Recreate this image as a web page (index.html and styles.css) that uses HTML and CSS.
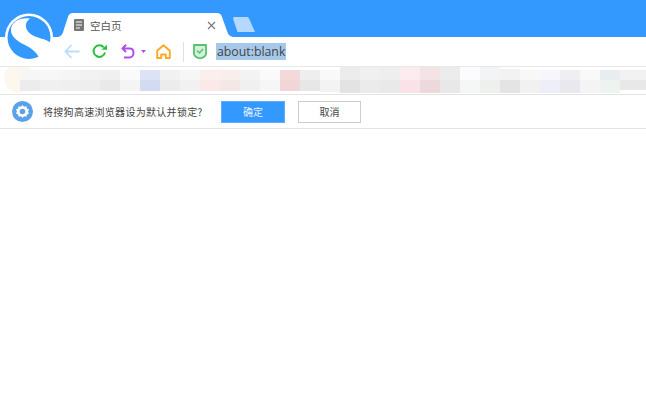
FILE: index.html
```html
<!DOCTYPE html>
<html lang="zh-CN">
<head>
    <meta charset="UTF-8">
    <title>空白页</title>
    <link rel="stylesheet" href="styles.css">
</head>
<body>
    <svg class="logo" width="52" height="52" viewBox="0 0 52 52">
        <circle cx="27" cy="26.500" r="24" fill="#fff"/>
        <circle cx="27" cy="26.500" r="21.500" fill="#3399ff"/>
        <path d="M28 7.500C18 6 9 11 9 19C9 25 14 29 20 32.500C28 36.500 35 40 38 49Q46 44 50 33C44 27 34 27.500 28 22.500C23 18 22 12 28 7.500Z" fill="#fff"/>
    </svg>

    <header class="tabstrip">
        <div class="tab">
            <svg class="tab-shape" width="176" height="24" viewBox="0 0 176 24"><path d="M0 24C4 23 5 20 6 16L10 4C11 1 12 0 16 0H158C162 0 163 1 164 4L169 18C170 21 171 23 175 24Z" fill="#fff"/></svg>
            <svg class="page-icon" width="10" height="12" viewBox="0 0 10 12">
                <rect width="10" height="12" rx="1" fill="#777"/>
                <path d="M2 3H8M2 6H8M2 9H6" stroke="#fff" stroke-width="1"/>
            </svg>
            <span class="tab-title">空白页</span>
            <svg class="tab-close" width="9" height="9" viewBox="0 0 9 9"><path d="M1 1L8 8M8 1L1 8" stroke="#777" stroke-width="1.100"/></svg>
        </div>
        <svg class="new-tab" width="24" height="15" viewBox="0 0 24 15"><path d="M1 1.500C1 .5 1.500 0 2.500 0H15C16 0 16.500 .5 17 1.500L23 15H5.500Z" fill="#b5d8ff"/></svg>
    </header>

    <div class="toolbar">
        <svg class="btn-back" width="16" height="15" viewBox="0 0 16 15" fill="none"><path d="M7.500 1L1.500 7.500L7.500 14M2 7.500H15.500" stroke="#bcdcff" stroke-width="1.800"/></svg>
        <svg class="btn-reload" width="16" height="15" viewBox="0 0 16 15" fill="none"><path d="M13 8.500A5.800 5.800 0 1 1 11.800 3.300" stroke="#22c33c" stroke-width="2"/><path d="M9.500 5.800H15V.8Z" fill="#22c33c"/></svg>
        <svg class="btn-undo" width="14" height="15" viewBox="0 0 14 15" fill="none"><path d="M1.500 4.500H8.500C11 4.500 12.500 6.300 12.500 8.800C12.500 11.500 10.800 13.500 8.500 13.500H3M5 .8L1.500 4.500L5 8" stroke="#b04df0" stroke-width="2"/></svg>
        <svg class="btn-more" width="5" height="3" viewBox="0 0 5 3"><path d="M0 0H5L2.500 3Z" fill="#b04df0"/></svg>
        <svg class="btn-home" width="15" height="15" viewBox="0 0 15 15" fill="none"><path d="M1.200 6.800L7.500 1.200L13.800 6.800V14H9.800V10.500H5.200V14H1.200Z" stroke="#ffa826" stroke-width="1.900" stroke-linejoin="round"/></svg>
        <div class="divider"></div>
        <svg class="shield" width="14" height="15" viewBox="0 0 14 15"><path d="M1 1H13V10C13 12 10 14 7 14.500C4 14 1 12 1 10Z" fill="#d3f0da" stroke="#58c070" stroke-width="1.800"/><path d="M4 6.500L6.500 9L10 5" fill="none" stroke="#58c070" stroke-width="1.500"/></svg>
        <span class="url">about:blank</span>
    </div>

    <div class="bookmarks">
        <svg class="bookmarks-blur" width="646" height="27" viewBox="0 0 646 27">
            <circle cx="19" cy="11" r="15" fill="#fdf8ee"/>
            <rect x="20" y="3" width="20" height="10" fill="#f6f6f6"/><rect x="20" y="13" width="20" height="11" fill="#ececec"/>
            <rect x="40" y="3" width="20" height="10" fill="#f7f7f7"/><rect x="40" y="13" width="20" height="11" fill="#f0f0f0"/>
            <rect x="60" y="3" width="20" height="10" fill="#f5f5f5"/><rect x="60" y="13" width="20" height="11" fill="#efefef"/>
            <rect x="80" y="3" width="20" height="10" fill="#f2f2f2"/><rect x="80" y="13" width="20" height="11" fill="#eeeeee"/>
            <rect x="100" y="3" width="20" height="10" fill="#f0f0f0"/><rect x="100" y="13" width="20" height="11" fill="#e9e9e9"/>
            <rect x="120" y="3" width="20" height="10" fill="#fafafa"/><rect x="120" y="13" width="20" height="11" fill="#f4f4f4"/>
            <rect x="140" y="3" width="20" height="10" fill="#dde3f6"/><rect x="140" y="13" width="20" height="11" fill="#d3dbf3"/>
            <rect x="160" y="3" width="20" height="10" fill="#f1f1f1"/><rect x="160" y="13" width="20" height="11" fill="#ececec"/>
            <rect x="180" y="3" width="20" height="10" fill="#f6f6f6"/><rect x="180" y="13" width="20" height="11" fill="#f1f1f1"/>
            <rect x="200" y="3" width="20" height="10" fill="#fdeeee"/><rect x="200" y="13" width="20" height="11" fill="#fbe9e8"/>
            <rect x="220" y="3" width="20" height="10" fill="#f8eeec"/><rect x="220" y="13" width="20" height="11" fill="#f3e8e6"/>
            <rect x="240" y="3" width="20" height="10" fill="#f3f3f3"/><rect x="240" y="13" width="20" height="11" fill="#f0f0f0"/>
            <rect x="260" y="3" width="20" height="10" fill="#fafafa"/><rect x="260" y="13" width="20" height="11" fill="#f6f6f6"/>
            <rect x="280" y="3" width="20" height="10" fill="#f5d9da"/><rect x="280" y="13" width="20" height="11" fill="#f2d5d6"/>
            <rect x="300" y="3" width="20" height="10" fill="#eeeeee"/><rect x="300" y="13" width="20" height="11" fill="#e7e7e7"/>
            <rect x="320" y="3" width="20" height="10" fill="#f9f9f9"/><rect x="320" y="13" width="20" height="12" fill="#f3f3f3"/>
            <rect x="340" y="0" width="20" height="13" fill="#ececec"/><rect x="340" y="13" width="20" height="13" fill="#e3e3e3"/>
            <rect x="360" y="0" width="20" height="13" fill="#f0f0f0"/><rect x="360" y="13" width="20" height="13" fill="#ebebeb"/>
            <rect x="380" y="0" width="20" height="13" fill="#eeeeee"/><rect x="380" y="13" width="20" height="13" fill="#e9e9e9"/>
            <rect x="400" y="0" width="20" height="13" fill="#fcecef"/><rect x="400" y="13" width="20" height="13" fill="#fae3e8"/>
            <rect x="420" y="0" width="20" height="13" fill="#f3e3e5"/><rect x="420" y="13" width="20" height="13" fill="#ecd9dc"/>
            <rect x="440" y="0" width="20" height="13" fill="#ececec"/><rect x="440" y="13" width="20" height="13" fill="#e8e8e8"/>
            <rect x="460" y="0" width="20" height="13" fill="#fcfcff"/><rect x="460" y="13" width="20" height="13" fill="#f5f7f7"/>
            <rect x="480" y="0" width="20" height="13" fill="#f3f4f6"/><rect x="480" y="13" width="20" height="13" fill="#eef0ee"/>
            <rect x="500" y="2" width="20" height="11" fill="#f2f2f2"/><rect x="500" y="13" width="20" height="13" fill="#e4e4e4"/>
            <rect x="520" y="3" width="20" height="10" fill="#f8f8f8"/><rect x="520" y="13" width="20" height="13" fill="#f1f1f1"/>
            <rect x="540" y="3" width="20" height="10" fill="#f6f6fc"/><rect x="540" y="13" width="20" height="13" fill="#eeeef8"/>
            <rect x="560" y="3" width="20" height="10" fill="#efeff3"/><rect x="560" y="13" width="20" height="13" fill="#e8e8ee"/>
            <rect x="580" y="3" width="20" height="10" fill="#f9f9f9"/><rect x="580" y="13" width="20" height="13" fill="#f4f4f4"/>
            <rect x="600" y="3" width="20" height="10" fill="#e8edf0"/><rect x="600" y="13" width="20" height="13" fill="#edf3ef"/>
            <rect x="620" y="3" width="26" height="10" fill="#f2f2f2"/><rect x="620" y="13" width="26" height="10" fill="#e8e8e8"/>
        </svg>
    </div>

    <div class="infobar">
        <svg class="gear" width="21" height="21" viewBox="0 0 21 21">
            <circle cx="10.500" cy="10.500" r="10.500" fill="#5ba1ea"/>
            <path d="M10.500 4L12 5.800L14.300 5.300L15 7.500L17 8.600L16 10.500L17 12.400L15 13.500L14.300 15.700L12 15.200L10.500 17L9 15.200L6.700 15.700L6 13.500L4 12.400L5 10.500L4 8.600L6 7.500L6.700 5.300L9 5.800Z" fill="#fff"/>
            <circle cx="10.500" cy="10.500" r="2.800" fill="#5ba1ea"/>
        </svg>
        <span class="info-text">将搜狗高速浏览器设为默认并锁定?</span>
        <button class="btn btn-ok">确定</button>
        <button class="btn btn-cancel">取消</button>
    </div>
</body>
</html>
```

FILE: styles.css
```css
body {
	margin: 0;
	height: 407px;
	overflow: hidden;
	background: #fff;
	font-family: "Noto Sans CJK SC", "Liberation Sans", sans-serif;
	font-size: 10px;
	color: #444;
}

.logo {
	position: absolute;
	left: 2px;
	top: 11px;
	z-index: 2;
}

.tabstrip {
	display: flex;
	align-items: flex-end;
	height: 37px;
	padding-left: 58px;
	background: #3399ff;
}

.tab {
	position: relative;
	display: flex;
	align-items: center;
	width: 176px;
	height: 24px;
}

.tab-shape {
	position: absolute;
	left: 0;
	top: 0;
}

.page-icon {
	position: relative;
	margin-left: 16px;
}

.tab-title {
	position: relative;
	margin-left: 6px;
	font-size: 10.500px;
	color: #555;
}

.tab-close {
	position: relative;
	margin-left: 85px;
}

.new-tab {
	margin-left: -2px;
	margin-bottom: 5px;
}

.toolbar {
	display: flex;
	align-items: center;
	height: 29px;
	padding-left: 64px;
	border-bottom: 1px solid #e8e8e8;
}

.btn-reload {
	margin-left: 12px;
}

.btn-undo {
	margin-left: 13px;
}

.btn-more {
	margin-left: 6px;
}

.btn-home {
	margin-left: 10px;
}

.divider {
	width: 1px;
	height: 20px;
	margin-left: 12px;
	background: #e0e0e0;
}

.shield {
	margin-left: 9px;
}

.url {
	margin-left: 9px;
	padding: 0 1px;
	background: #a6c9ea;
	font-family: "Open Sans", "Liberation Sans", sans-serif;
	font-size: 12.300px;
	line-height: 17px;
	color: #444;
}

.bookmarks {
	height: 27px;
	border-bottom: 1px solid #e3e3e3;
}

.bookmarks-blur {
	display: block;
}

.infobar {
	display: flex;
	align-items: center;
	height: 33px;
	padding-left: 12px;
	border-bottom: 1px solid #e3e3e3;
}

.info-text {
	margin-left: 10px;
	width: 178px;
	white-space: nowrap;
	letter-spacing: 0.300px;
	color: #444;
}

.btn {
	height: 22px;
	padding: 0;
	border: 1px solid;
	font-family: inherit;
	font-size: 10px;
}

.btn-ok {
	width: 64px;
	background: #3399ff;
	border-color: #5aadff;
	color: #e8f3ff;
}

.btn-cancel {
	width: 63px;
	margin-left: 13px;
	background: #fff;
	border-color: #ccc;
	color: #444;
}
```
